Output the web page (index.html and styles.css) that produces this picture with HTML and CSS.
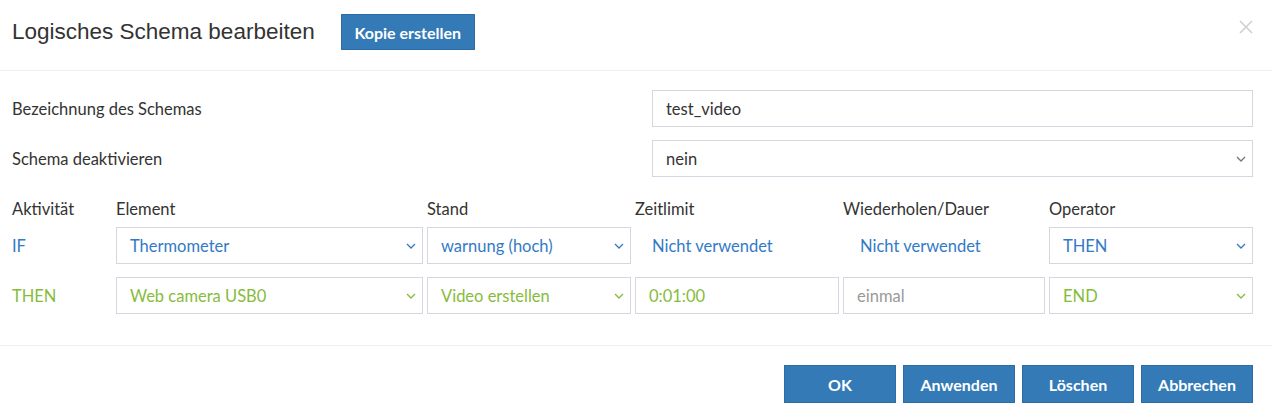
FILE: index.html
```html
<!DOCTYPE html>
<html lang="de">
<head>
    <meta charset="UTF-8">
    <title>Logisches Schema bearbeiten</title>
    <link rel="stylesheet" href="styles.css">
</head>
<body>

<div class="modal">
    <div class="modal-header">
        <h1 class="modal-title">Logisches Schema bearbeiten</h1>
        <button class="btn btn-copy">Kopie erstellen</button>
        <svg class="close" width="14" height="14" viewBox="0 0 14 14"><path d="M1 1l12 12M13 1L1 13" stroke="currentColor" stroke-width="1.6"/></svg>
    </div>

    <div class="modal-body">
        <div class="form-row">
            <label for="schemaName">Bezeichnung des Schemas</label>
            <input type="text" id="schemaName" class="field" value="test_video" />
        </div>
        <div class="form-row">
            <label>Schema deaktivieren</label>
            <div class="field select">
                <span>nein</span>
                <svg class="chevron" width="10" height="6" viewBox="0 0 10 6"><path d="M1 1l4 4 4-4" fill="none" stroke="currentColor" stroke-width="1.3"/></svg>
            </div>
        </div>

        <div class="rules">
            <div class="head">Aktivität</div>
            <div class="head">Element</div>
            <div class="head">Stand</div>
            <div class="head">Zeitlimit</div>
            <div class="head">Wiederholen/Dauer</div>
            <div class="head">Operator</div>

            <div class="act blue">IF</div>
            <div class="field select blue">
                <span>Thermometer</span>
                <svg class="chevron" width="10" height="6" viewBox="0 0 10 6"><path d="M1 1l4 4 4-4" fill="none" stroke="currentColor" stroke-width="1.3"/></svg>
            </div>
            <div class="field select blue">
                <span>warnung (hoch)</span>
                <svg class="chevron" width="10" height="6" viewBox="0 0 10 6"><path d="M1 1l4 4 4-4" fill="none" stroke="currentColor" stroke-width="1.3"/></svg>
            </div>
            <div class="unused blue">Nicht verwendet</div>
            <div class="unused blue">Nicht verwendet</div>
            <div class="field select blue">
                <span>THEN</span>
                <svg class="chevron" width="10" height="6" viewBox="0 0 10 6"><path d="M1 1l4 4 4-4" fill="none" stroke="currentColor" stroke-width="1.3"/></svg>
            </div>

            <div class="act green">THEN</div>
            <div class="field select green">
                <span>Web camera USB0</span>
                <svg class="chevron" width="10" height="6" viewBox="0 0 10 6"><path d="M1 1l4 4 4-4" fill="none" stroke="currentColor" stroke-width="1.3"/></svg>
            </div>
            <div class="field select green">
                <span>Video erstellen</span>
                <svg class="chevron" width="10" height="6" viewBox="0 0 10 6"><path d="M1 1l4 4 4-4" fill="none" stroke="currentColor" stroke-width="1.3"/></svg>
            </div>
            <input type="text" class="field green" value="0:01:00" />
            <input type="text" class="field" placeholder="einmal" />
            <div class="field select green">
                <span>END</span>
                <svg class="chevron" width="10" height="6" viewBox="0 0 10 6"><path d="M1 1l4 4 4-4" fill="none" stroke="currentColor" stroke-width="1.3"/></svg>
            </div>
        </div>
    </div>

    <div class="modal-footer">
        <button class="btn btn-foot">OK</button>
        <button class="btn btn-foot">Anwenden</button>
        <button class="btn btn-foot">Löschen</button>
        <button class="btn btn-foot">Abbrechen</button>
    </div>
</div>

</body>
</html>
```

FILE: styles.css
```css
body {
    margin: 0;
    background-color: #fff;
    color: #333;
    font-family: Lato, "Open Sans", sans-serif;
    font-size: 16.5px;
    line-height: 20px;
}
.modal {
    width: 1272px;
}
.modal-header {
    display: flex;
    align-items: center;
    height: 36px;
    padding: 14px 19px 20px 12px;
    border-bottom: 1px solid #eee;
}
.modal-title {
    margin: 0 26px 0 0;
    font-family: "Liberation Sans", Arial, sans-serif;
    font-size: 22.5px;
    font-weight: normal;
    color: #333;
}
.close {
    margin-left: auto;
    margin-top: -10px;
    color: #cfcfcf;
}
.btn {
    background-color: #337ab7;
    border: 1px solid #2e6da4;
    color: #fff;
    font-family: Lato, "Open Sans", sans-serif;
    font-size: 16px;
    font-weight: bold;
    cursor: pointer;
    height: 36px;
}
.btn-copy {
    width: 134px;
    padding: 0;
}
.modal-body {
    padding: 19px 19px 31px 12px;
    border-bottom: 1px solid #eee;
}
.form-row {
    display: grid;
    grid-template-columns: 1fr 601px;
    align-items: center;
    margin-bottom: 13px;
}
.field {
    box-sizing: border-box;
    height: 37px;
    border: 1px solid #d6d6e0;
    background: #fff;
    padding: 0 13px;
    font-family: Lato, "Open Sans", sans-serif;
    font-size: 16.5px;
    color: #333;
    width: 100%;
    outline: none;
}
.field::placeholder {
    color: #999;
}
.select {
    display: flex;
    align-items: center;
    justify-content: space-between;
    padding-right: 6px;
}
.chevron {
    color: #777;
}
.rules {
    display: grid;
    grid-template-columns: 100px 307px 204px 204px 202px 204px;
    column-gap: 4px;
    row-gap: 13px;
    align-items: center;
    margin-top: 22px;
}
.head {
    margin-bottom: -5px;
}
.unused {
    padding-left: 17px;
}
.blue,
.blue .chevron {
    color: #337ac6;
}
.green,
.green .chevron {
    color: #86bc3c;
}
.modal-footer {
    display: flex;
    justify-content: flex-end;
    gap: 7px;
    padding: 19px 19px 11px 0;
}
.btn-foot {
    width: 112px;
    height: 38px;
}
```
